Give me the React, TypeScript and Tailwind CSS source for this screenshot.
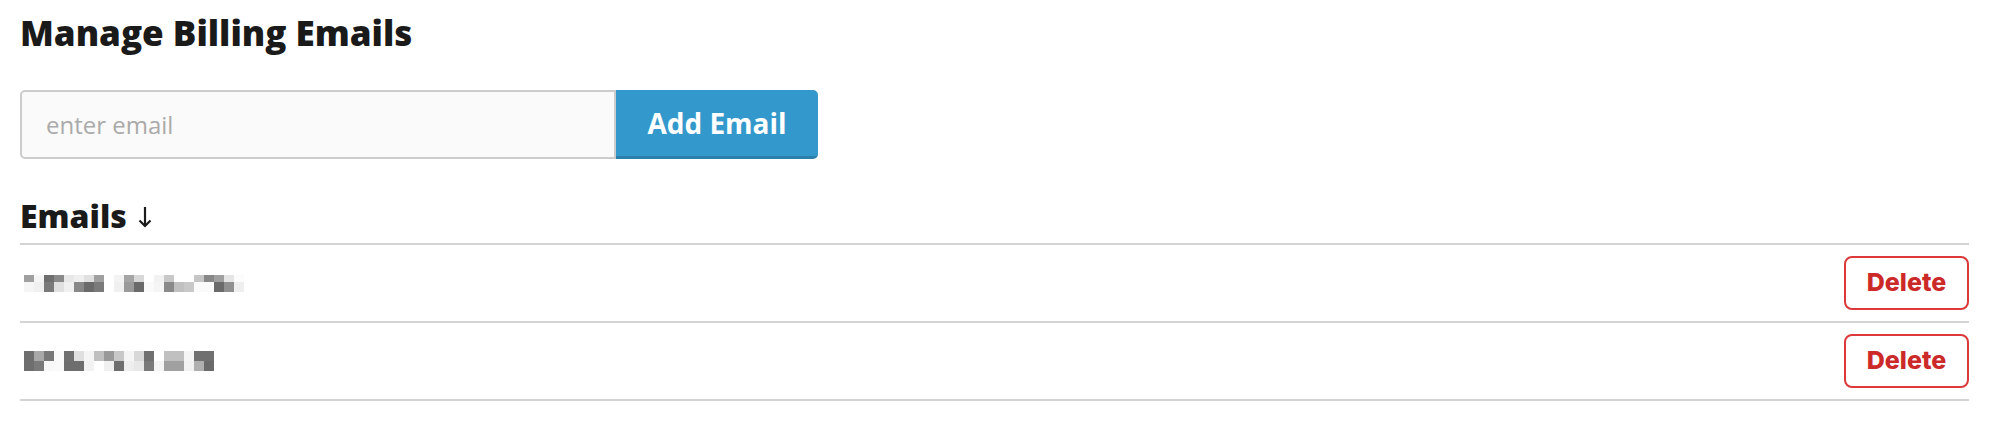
import React from "react";

interface EmailRowProps {
    id: string;
    top: string[];
    bottom: string[];
    topH: number;
    bottomH: number;
}

const rows: EmailRowProps[] = [
    {
        id: "1",
        topH: 7,
        bottomH: 10,
        top: ["#a0a0a0", "#f5f5f5", "#6e6e6e", "#8a8a8a", "#e8e8e8", "#efefef", "#e0e0e0", "#a0a0a0", "#ffffff", "#f3f3f3", "#a5a5a5", "#d8d8d8", "#ffffff", "#f2f2f2", "#c8c8c8", "#ffffff", "#ffffff", "#c5c5c5", "#878787", "#a0a0a0", "#e5e5e5", "#fcfcfc"],
        bottom: ["#f5f5f5", "#f0f0f0", "#7a7a7a", "#e0e0e0", "#f0f0f0", "#888888", "#6a6a6a", "#7a7a7a", "#ffffff", "#f0f0f0", "#9a9a9a", "#6a6a6a", "#fafafa", "#f5f5f5", "#8a8a8a", "#c0c0c0", "#c8c8c8", "#fafafa", "#fafafa", "#6a6a6a", "#909090", "#eeeeee"],
    },
    {
        id: "2",
        topH: 10,
        bottomH: 10,
        top: ["#6e6e6e", "#a8a8a8", "#787878", "#fafafa", "#707070", "#e0e0e0", "#f5f5f5", "#c0c0c0", "#999999", "#c8c8c8", "#f5f5f5", "#d8d8d8", "#707070", "#ffffff", "#c0c0c0", "#c0c0c0", "#f5f5f5", "#707070", "#707070"],
        bottom: ["#6e6e6e", "#7a7a7a", "#f8f8f8", "#fafafa", "#6e6e6e", "#6e6e6e", "#f2f2f2", "#ffffff", "#f0f0f0", "#6e6e6e", "#eeeeee", "#e8e8e8", "#7a7a7a", "#f5f5f5", "#a0a0a0", "#a0a0a0", "#f2f2f2", "#b0b0b0", "#6a6a6a"],
    },
];

// blurred address, drawn as the mosaic it shows in the screenshot
function Mosaic({ top, bottom, topH, bottomH }: EmailRowProps) {
    return (
        <div className="flex flex-col pl-1">
            <div className="flex">
                {top.map((c, i) => (
                    <div key={i} className="w-[10px]" style={{ backgroundColor: c, height: topH }} />
                ))}
            </div>
            <div className="flex">
                {bottom.map((c, i) => (
                    <div key={i} className="w-[10px]" style={{ backgroundColor: c, height: bottomH }} />
                ))}
            </div>
        </div>
    );
}

function EmailRow(props: EmailRowProps) {
    return (
        <div className="flex items-center justify-between h-[78px] border-b-2 border-[#d4d4d4]">
            <Mosaic {...props} />
            <button className="w-[125px] h-[54px] border-2 border-[#dc3a3a] rounded-[8px] bg-white text-[#cc2929] text-[25px] font-extrabold font-['Inter',sans-serif]">
                Delete
            </button>
        </div>
    );
}

export default function App() {
    return (
        <div className="bg-white w-[1989px] h-[426px] px-5 font-['Open_Sans',sans-serif] text-[#1a1a1a]">
            <h1 className="pt-[13px] text-[35px] leading-[40px] font-extrabold">Manage Billing Emails</h1>

            <div className="flex mt-[37px] h-[69px]">
                <input
                    className="w-[596px] h-full bg-[#fafafa] border-2 border-[#cccccc] rounded-l-[5px] pl-6 text-[24px] outline-none placeholder:text-[#aaaaaa]"
                    placeholder="enter email"
                />
                <button className="w-[202px] h-full bg-[#3399cc] border-b-[3px] border-[#2a7fab] rounded-r-[5px] text-white text-[28px] font-bold">
                    Add Email
                </button>
            </div>

            <div className="flex items-center gap-[11px] mt-[40px] pb-[10px] h-[34px] box-content border-b-2 border-[#d4d4d4] text-[32px] leading-[34px] font-extrabold">
                <span>Emails</span>
                <svg width="14" height="22" viewBox="0 0 14 22" fill="none" stroke="#1a1a1a" strokeWidth="2.2" className="mt-[2px]">
                    <path d="M7 1v19" />
                    <path d="M1.5 14.5L7 20l5.5-5.5" />
                </svg>
            </div>

            <div className="flex flex-col">
                {rows.map(r => (
                    <EmailRow key={r.id} {...r} />
                ))}
            </div>
        </div>
    );
}
